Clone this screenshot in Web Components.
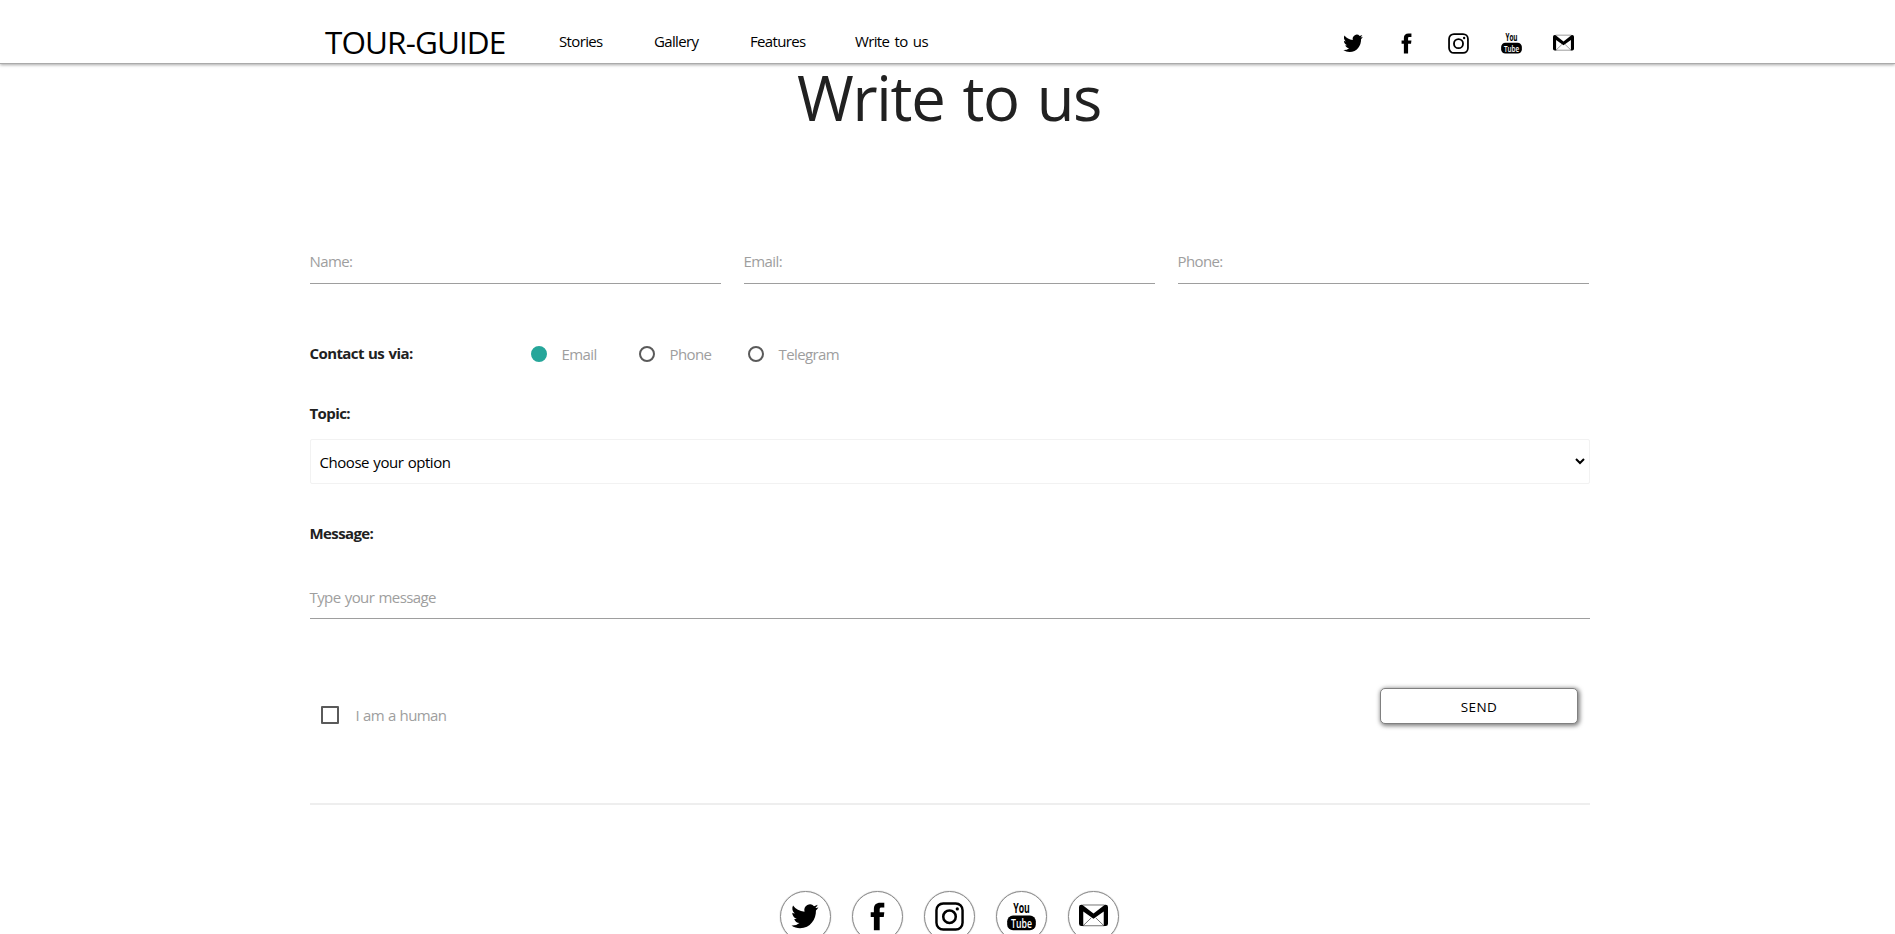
<!DOCTYPE html>
<html lang="en">
<head>
<meta charset="utf-8">
<title>Tour-Guide</title>
<style>
html,body{margin:0;height:934px;overflow:hidden;background:#fff}
body{font:15px/20px "Open Sans","Noto Sans",sans-serif;color:#212121}
</style>
</head>
<body>
<tour-page></tour-page>
<script>
const define = (name, html, init) => customElements.define(name, class extends HTMLElement {
  constructor(){
    super();
    this.attachShadow({mode:"open"}).innerHTML = html;
  }
  connectedCallback(){ if(init) init(this, this.shadowRoot); }
});

const ICONS = {
  twitter:'<path transform="translate(-1.9 -2.2) scale(1.09 1.16)" d="M29.500 6.800c-1 .5-2.100.8-3.300.9 1.200-.7 2-1.800 2.500-3.100-1.100.6-2.300 1.100-3.600 1.300a5.700 5.700 0 0 0-9.700 5.200C10.400 10.900 6.500 8.600 3.800 5.300c-1.400 2.500-.8 5.900 1.800 7.600-.9 0-1.800-.3-2.600-.7 0 2.800 1.900 5.100 4.500 5.700-.8.2-1.700.2-2.500.1.7 2.200 2.800 3.900 5.300 3.900A11.400 11.400 0 0 1 2.200 24.300c2.500 1.700 5.600 2.600 8.700 2.600 10.500 0 16.300-8.700 16.100-16.900 1-.8 1.900-2 2.500-3.200z"/>',
  facebook:'<path d="M12 31.200V16.500H8.500v-5.200H12V7.800C12 3 14.500.7 19 .7h4.500v5.400H20.600c-1.700 0-2.200.7-2.200 2.100v3.100h5.100l-.6 5.200h-4.500v14.700z"/>',
  instagram:'<rect x="1.600" y="1.600" width="28.800" height="28.800" rx="7.500" fill="none" stroke="#000" stroke-width="2.700"/><circle cx="16" cy="16.200" r="6.900" fill="none" stroke="#000" stroke-width="2.800"/><circle cx="24.600" cy="7.600" r="1.800"/>',
  youtube:'<text x="6.800" y="12.600" font-size="16" font-weight="700" textLength="18.400" lengthAdjust="spacingAndGlyphs">You</text><rect x=".2" y="14.800" width="31.600" height="16.400" rx="6.500"/><text x="4.500" y="28.200" font-size="14.500" font-weight="600" fill="#fff" textLength="23" lengthAdjust="spacingAndGlyphs">Tube</text>',
  gmail:'<path d="M3.500 3 16 12.800 28.500 3h.9A2.600 2.600 0 0 1 32 5.600v18.300a2.600 2.600 0 0 1-2.600 2.600H27.300V10.500L16 18.600 4.700 10.500v16H2.600A2.600 2.600 0 0 1 0 23.900V5.600A2.600 2.600 0 0 1 2.600 3z"/><path d="M4 3.300h24M4 26.200h24M4.700 26 13.500 17.500M27.300 26 18.500 17.500" fill="none" stroke="#000" stroke-width=".6"/>'
};
define("social-icon", `<style>:host{display:block;width:var(--icon,21px);height:var(--icon,21px)}svg{display:block;width:100%;height:100%;overflow:visible;font-family:"Open Sans",sans-serif;line-height:1}</style><svg viewBox="0 0 32 32"></svg>`,
  (el, root) => root.querySelector("svg").innerHTML = ICONS[el.getAttribute("name")]);

define("nav-link", `<style>:host{display:block;color:#000;white-space:nowrap}</style><slot></slot>`);

define("site-header", `<style>
:host{display:flex;box-sizing:border-box;height:64px;padding:31px 321px 0 325px;background:#fff;border-bottom:1px solid #aaa;box-shadow:0 1px 3px rgba(0,0,0,.35);align-items:flex-start;color:#000}
.logo{font-size:31.500px;line-height:24px;letter-spacing:-.9px;width:234px;margin-top:-1px;white-space:nowrap}
nav{display:grid;grid-template-columns:95px 96px 105px 90px;letter-spacing:-.65px;word-spacing:2px}
.icons{display:flex;gap:31.500px;margin:2px 0 0 auto}
</style>
<div class="logo">TOUR-GUIDE</div>
<nav><nav-link>Stories</nav-link><nav-link>Gallery</nav-link><nav-link>Features</nav-link><nav-link>Write to us</nav-link></nav>
<div class="icons"><social-icon name="twitter"></social-icon><social-icon name="facebook"></social-icon><social-icon name="instagram"></social-icon><social-icon name="youtube"></social-icon><social-icon name="gmail"></social-icon></div>`);

define("text-field", `<style>:host{display:block;box-sizing:border-box;height:33px;border-bottom:1px solid #9e9e9e;color:#9e9e9e;letter-spacing:-.6px;word-spacing:1px}slot{display:block;margin-left:-.5px}</style><slot></slot>`);

define("radio-option", `<style>
:host{display:flex;align-items:flex-start;color:#9e9e9e;letter-spacing:-.6px}
i{box-sizing:border-box;width:16px;height:16px;border:2px solid #5a5a5a;border-radius:50%;margin:2px 14.500px 0 0}
:host([checked]) i{background:#26a69a;border-color:#26a69a}
</style><i></i><slot></slot>`);

define("check-option", `<style>
:host{display:flex;color:#9e9e9e;letter-spacing:-.6px;word-spacing:.6px}
i{box-sizing:border-box;width:18px;height:18px;border:2px solid #5a5a5a;border-radius:1px;margin:1px 16.500px 0 0}
</style><i></i><slot></slot>`);

define("field-label", `<style>:host{display:block;font-weight:700;white-space:nowrap;letter-spacing:-.6px;word-spacing:1px}slot{display:block;margin-left:-.5px}</style><slot></slot>`);

define("topic-select", `<style>
:host{display:flex;box-sizing:border-box;height:45px;border:1px solid #f2f2f2;border-radius:2px;padding:12px 4px 0 8.500px;color:#000;justify-content:space-between;letter-spacing:-.45px;word-spacing:.8px}
svg{margin-top:6px;width:10px;height:8px}
</style><slot></slot><svg viewBox="0 0 10 8"><path d="M1 1 5 5 9 1" fill="none" stroke="#000" stroke-width="2"/></svg>`);

define("send-button", `<style>
:host{display:block;box-sizing:border-box;width:198px;height:36px;border:1px solid gray;border-radius:5px;background:#fff;box-shadow:1px 1px 4px 1px rgba(0,0,0,.5);color:#000;text-align:center;font-size:13.500px;line-height:36px;letter-spacing:.4px}
</style><slot></slot>`);

define("contact-form", `<style>
:host{display:block;width:1280px;margin-left:310px}
.row{display:grid;grid-template-columns:repeat(3,411px);gap:23px}
.via{display:flex;height:20px;margin-top:60px}
.via field-label{width:221px;margin-top:-1px}
.radios{display:grid;grid-template-columns:108px 109px 110px}
.topic{margin:39px 0 16px}
.message{margin:39px 0 44px}
.long{height:32px}
.actions{display:flex;justify-content:space-between;align-items:flex-start;padding:69px 12px 0 11px;height:115px;box-sizing:border-box}
.actions check-option{margin-top:17px}
.rule{height:2px;background:#eee;margin-top:69px}
</style>
<div class="row"><text-field>Name:</text-field><text-field>Email:</text-field><text-field>Phone:</text-field></div>
<div class="via"><field-label>Contact us via:</field-label><div class="radios"><radio-option checked>Email</radio-option><radio-option>Phone</radio-option><radio-option>Telegram</radio-option></div></div>
<field-label class="topic">Topic:</field-label>
<topic-select>Choose your option</topic-select>
<field-label class="message">Message:</field-label>
<text-field class="long">Type your message</text-field>
<div class="actions"><check-option>I am a human</check-option><send-button>SEND</send-button></div>
<div class="rule"></div>`);

define("round-link", `<style>:host{display:flex;box-sizing:border-box;width:51px;height:51px;border:1px solid #888;box-shadow:0 0 1px #777;border-radius:50%;align-items:center;justify-content:center;--icon:29px}social-icon{margin:0}</style><slot></slot>`);

define("site-footer", `<style>:host{display:flex;gap:21px;padding:85.500px 0 0 780px}</style>
${Object.keys(ICONS).map(n=>`<round-link><social-icon name="${n}"></social-icon></round-link>`).join("")}`);

define("tour-page", `<style>
:host{display:block;height:934px;overflow:hidden}
h1{margin:-4px 0 0;padding-left:797px;height:76px;font-weight:400;font-size:61.500px;line-height:75px;letter-spacing:-1.300px;word-spacing:3.300px;white-space:nowrap}
contact-form{padding-top:115px}
</style>
<site-header></site-header>
<h1>Write to us</h1>
<contact-form></contact-form>
<site-footer></site-footer>`);
</script>
</body>
</html>
